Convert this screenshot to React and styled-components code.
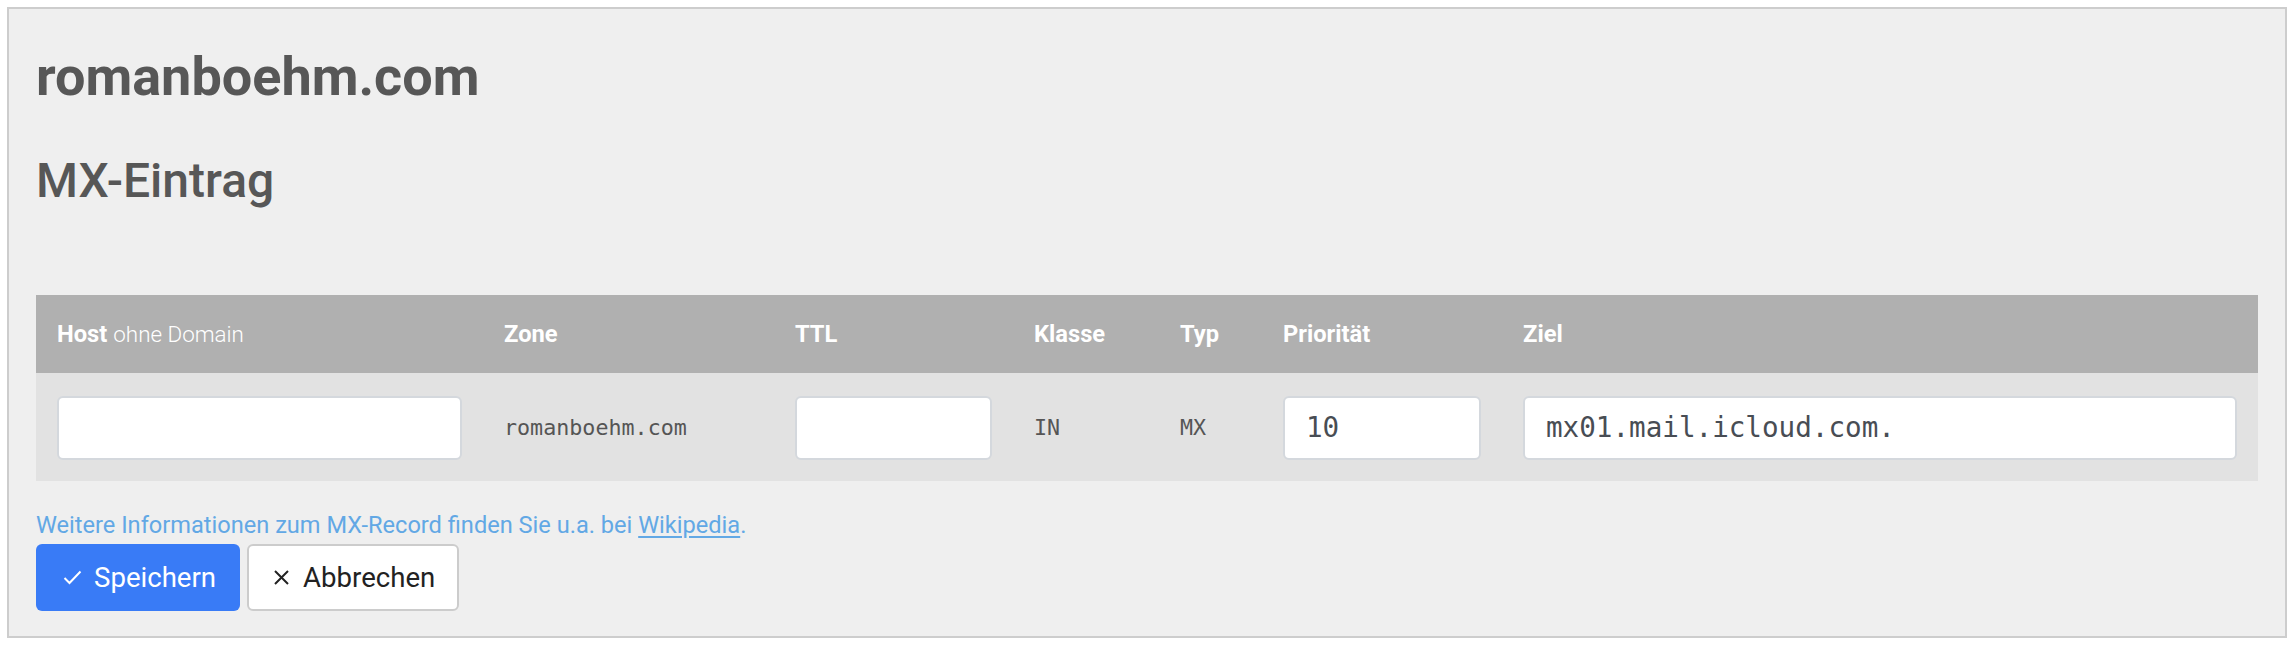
import React from "react";
import styled, { createGlobalStyle } from "styled-components";

const Global = createGlobalStyle`
  html, body { margin: 0; padding: 0; background: #ffffff; }
  body { font-family: Roboto, "Liberation Sans", sans-serif; }
  * { box-sizing: border-box; }
`;

const Page = styled.div`
  padding: 7px 9px 10px 7px;
`;

const Panel = styled.section`
  background: #efefef;
  border: 2px solid #cdcdcd;
  padding: 36px 27px 25px 27px;
`;

const Title = styled.h1`
  margin: 0;
  font-family: Roboto, sans-serif;
  font-weight: 700;
  font-size: 54px;
  line-height: 64px;
  color: #575757;
`;

const Subtitle = styled.h2`
  margin: 44px 0 0 0;
  font-family: Roboto, sans-serif;
  font-weight: 500;
  font-size: 48px;
  line-height: 56px;
  color: #575757;
`;

const RecordTable = styled.div`
  margin-top: 86px;
  display: grid;
  grid-template-columns: 447px 291px 239px 146px 103px 240px 1fr;
`;

const HeadCell = styled.div`
  background: #b0b0b0;
  height: 78px;
  display: flex;
  align-items: center;
  padding: 0 21px 0 21px;
  color: #ffffff;
  font-family: Roboto, sans-serif;
  font-weight: 700;
  font-size: 23.7px;
  white-space: nowrap;
`;

const HeadHint = styled.span`
  font-weight: 300;
  font-size: 22.4px;
  margin-left: 6px;
`;

const Cell = styled.div`
  background: #e2e2e2;
  height: 108px;
  display: flex;
  align-items: center;
  padding: 1px 21px 0 21px;
  font-family: "DejaVu Sans Mono", "Liberation Mono", monospace;
  font-size: 21.7px;
  color: #555555;
`;

const Field = styled.input`
  width: 100%;
  height: 64px;
  border: 2px solid #d4d8dd;
  border-radius: 6px;
  background: #ffffff;
  padding: 0 21px;
  font-family: "DejaVu Sans Mono", "Liberation Mono", monospace;
  font-size: 27.6px;
  color: #484d54;
  outline: none;
`;

const Info = styled.p`
  margin: 29px 0 0 0;
  font-family: Roboto, sans-serif;
  font-weight: 400;
  font-size: 23.6px;
  line-height: 30px;
  color: #62a8e5;
`;

const InfoLink = styled.a`
  color: inherit;
  text-decoration: underline;
  text-underline-offset: 3px;
`;

const Actions = styled.div`
  margin-top: 4px;
  display: flex;
  gap: 7px;
`;

const Button = styled.button`
  height: 67px;
  display: inline-flex;
  align-items: center;
  gap: ${(p) => (p.$primary ? "12px" : "13px")};
  padding: ${(p) => (p.$primary ? "0 24px 0 27px" : "0 22px 0 24px")};
  border-radius: 6px;
  border: ${(p) => (p.$primary ? "none" : "2px solid #cccccc")};
  background: ${(p) => (p.$primary ? "#397bf6" : "#ffffff")};
  color: ${(p) => (p.$primary ? "#ffffff" : "#222222")};
  font-family: Roboto, sans-serif;
  font-size: 27.6px;
  font-weight: 400;
  cursor: pointer;
`;

const Check = () => (
  <svg width="19" height="15" viewBox="0 0 19 15" fill="none">
    <path d="M1.5 8 L6.5 13 L17.5 1.5" stroke="currentColor" strokeWidth="2" />
  </svg>
);

const Cross = () => (
  <svg width="17" height="15" viewBox="0 0 17 15" fill="none">
    <path d="M2 1 L15 14 M15 1 L2 14" stroke="currentColor" strokeWidth="2" />
  </svg>
);

export default function App() {
  return (
    <>
      <Global />
      <Page>
        <Panel>
          <Title>romanboehm.com</Title>
          <Subtitle>MX-Eintrag</Subtitle>
          <RecordTable>
            <HeadCell>
              Host<HeadHint>ohne Domain</HeadHint>
            </HeadCell>
            <HeadCell>Zone</HeadCell>
            <HeadCell>TTL</HeadCell>
            <HeadCell>Klasse</HeadCell>
            <HeadCell>Typ</HeadCell>
            <HeadCell>Priorität</HeadCell>
            <HeadCell>Ziel</HeadCell>

            <Cell>
              <Field type="text" defaultValue="" />
            </Cell>
            <Cell>romanboehm.com</Cell>
            <Cell>
              <Field type="text" defaultValue="" />
            </Cell>
            <Cell>IN</Cell>
            <Cell>MX</Cell>
            <Cell>
              <Field type="text" defaultValue="10" />
            </Cell>
            <Cell>
              <Field type="text" defaultValue="mx01.mail.icloud.com." />
            </Cell>
          </RecordTable>
          <Info>
            Weitere Informationen zum MX-Record finden Sie u.a. bei{" "}
            <InfoLink href="#">Wikipedia</InfoLink>.
          </Info>
          <Actions>
            <Button $primary>
              <Check />
              Speichern
            </Button>
            <Button>
              <Cross />
              Abbrechen
            </Button>
          </Actions>
        </Panel>
      </Page>
    </>
  );
}
